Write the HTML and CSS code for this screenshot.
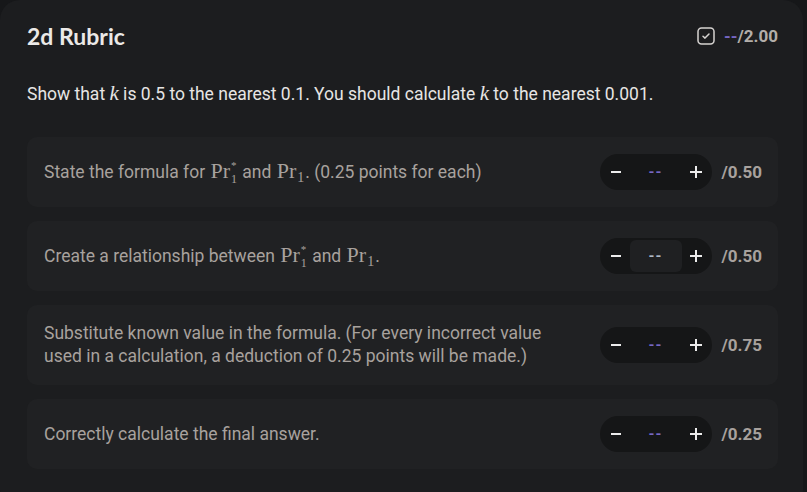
FILE: index.html
```html
<!DOCTYPE html>
<html lang="en">
<head>
<meta charset="utf-8">
<title>2d Rubric</title>
<link rel="stylesheet" href="styles.css">
</head>
<body>
<div class="card">
  <div class="header">
    <h1 class="title">2d Rubric</h1>
    <div class="total">
      <svg class="check" width="18" height="18" viewBox="0 0 18 18" aria-hidden="true">
        <rect x="1" y="1" width="16" height="16" rx="3.5" fill="none" stroke="#d6d3d1" stroke-width="1.5"/>
        <path d="M6 9.2 L8 11.1 L12 7" fill="none" stroke="#d6d3d1" stroke-width="1.5" stroke-linecap="round" stroke-linejoin="round"/>
      </svg>
      <span class="score"><span class="dash">--</span>/2.00</span>
    </div>
  </div>
  <p class="question">Show that <span class="mi">k</span> is 0.5 to the nearest 0.1. You should calculate <span class="mi">k</span> to the nearest 0.001.</p>

  <div class="rows">
    <div class="row">
      <div class="text">State the formula for <span class="math">Pr<span class="scripts"><span class="sp">*</span><span class="sb">1</span></span></span> and <span class="math">Pr<span class="sub">1</span></span>. (0.25 points for each)</div>
      <div class="control">
        <div class="stepper">
          <button class="btn" aria-label="decrease"><svg width="12" height="12" viewBox="0 0 12 12"><path d="M1 6 H11" stroke="#ececec" stroke-width="2"/></svg></button>
          <span class="value">--</span>
          <button class="btn" aria-label="increase"><svg width="14" height="14" viewBox="0 0 14 14"><path d="M1 7 H13 M7 1 V13" stroke="#ececec" stroke-width="2"/></svg></button>
        </div>
        <span class="max">/0.50</span>
      </div>
    </div>

    <div class="row">
      <div class="text">Create a relationship between <span class="math">Pr<span class="scripts"><span class="sp">*</span><span class="sb">1</span></span></span> and <span class="math">Pr<span class="sub">1</span></span>.</div>
      <div class="control">
        <div class="stepper">
          <button class="btn" aria-label="decrease"><svg width="12" height="12" viewBox="0 0 12 12"><path d="M1 6 H11" stroke="#ececec" stroke-width="2"/></svg></button>
          <span class="value active">--</span>
          <button class="btn" aria-label="increase"><svg width="14" height="14" viewBox="0 0 14 14"><path d="M1 7 H13 M7 1 V13" stroke="#ececec" stroke-width="2"/></svg></button>
        </div>
        <span class="max">/0.50</span>
      </div>
    </div>

    <div class="row">
      <div class="text">Substitute known value in the formula. (For every incorrect value used in a calculation, a deduction of 0.25 points will be made.)</div>
      <div class="control">
        <div class="stepper">
          <button class="btn" aria-label="decrease"><svg width="12" height="12" viewBox="0 0 12 12"><path d="M1 6 H11" stroke="#ececec" stroke-width="2"/></svg></button>
          <span class="value">--</span>
          <button class="btn" aria-label="increase"><svg width="14" height="14" viewBox="0 0 14 14"><path d="M1 7 H13 M7 1 V13" stroke="#ececec" stroke-width="2"/></svg></button>
        </div>
        <span class="max">/0.75</span>
      </div>
    </div>

    <div class="row">
      <div class="text">Correctly calculate the final answer.</div>
      <div class="control">
        <div class="stepper">
          <button class="btn" aria-label="decrease"><svg width="12" height="12" viewBox="0 0 12 12"><path d="M1 6 H11" stroke="#ececec" stroke-width="2"/></svg></button>
          <span class="value">--</span>
          <button class="btn" aria-label="increase"><svg width="14" height="14" viewBox="0 0 14 14"><path d="M1 7 H13 M7 1 V13" stroke="#ececec" stroke-width="2"/></svg></button>
        </div>
        <span class="max">/0.25</span>
      </div>
    </div>
  </div>
</div>
</body>
</html>
```

FILE: styles.css
```css
* { box-sizing: border-box; }

html, body {
  margin: 0;
  padding: 0;
  background: #161719;
  overflow: hidden;
}

body {
  font-family: Roboto, "Liberation Sans", sans-serif;
}

.card {
  width: 803px;
  height: 510px;
  background: #1c1d1f;
  border-radius: 20px;
  padding: 23px 25px 0 27px;
}

.header {
  display: flex;
  align-items: center;
  justify-content: space-between;
  height: 26px;
}

.title {
  margin: 0;
  font-family: Lato, "Noto Sans", sans-serif;
  font-weight: 700;
  font-size: 23px;
  line-height: 26px;
  color: #ebe9e7;
}

.total {
  display: flex;
  align-items: center;
  gap: 9px;
}

.check { display: block; }

.score {
  font-size: 17px;
  font-weight: 700;
  color: #b3aea9;
}

.dash { color: #7667c4; }

.question {
  margin: 33px 0 0;
  font-size: 17.5px;
  line-height: 24px;
  color: #e7e5e4;
}

.mi {
  font-family: "Liberation Serif", "DejaVu Serif", serif;
  font-style: italic;
  font-size: 21px;
  line-height: 0;
}

.rows {
  display: flex;
  flex-direction: column;
  gap: 14px;
  margin-top: 31px;
}

.row {
  display: flex;
  align-items: center;
  justify-content: space-between;
  gap: 30px;
  background: #202123;
  border-radius: 10px;
  padding: 17px 16px 17px 17px;
  min-height: 70px;
}

.text {
  font-size: 17.5px;
  line-height: 23px;
  color: #a8a29e;
  max-width: 515px;
}

.math {
  font-family: "Liberation Serif", "DejaVu Serif", serif;
  font-size: 22px;
  line-height: 0;
  margin: 0 1px;
}

.scripts {
  display: inline-block;
  vertical-align: -5px;
  margin-left: 1px;
}

.sp, .sb { display: block; }

.sp { font-size: 11px; line-height: 13px; }
.sb { font-size: 12px; line-height: 14px; }

.sub {
  font-size: 14px;
  vertical-align: -4px;
  margin-left: 1px;
}

.control {
  display: flex;
  align-items: center;
  gap: 10px;
  flex-shrink: 0;
}

.stepper {
  display: flex;
  align-items: center;
  height: 36px;
  padding: 2px;
  background: #151617;
  border-radius: 18px;
}

.btn {
  width: 28px;
  height: 32px;
  padding: 0;
  border: 0;
  background: transparent;
  display: flex;
  align-items: center;
  justify-content: center;
}

.btn svg { display: block; }

.value {
  width: 52px;
  height: 32px;
  display: flex;
  align-items: center;
  justify-content: center;
  font-size: 15px;
  font-weight: 700;
  color: #7667c4;
  border-radius: 6px;
  letter-spacing: 1px;
}

.value.active {
  background: #1f2022;
  color: #aeb8c6;
}

.max {
  font-size: 17px;
  font-weight: 700;
  color: #a8a29e;
}
```
